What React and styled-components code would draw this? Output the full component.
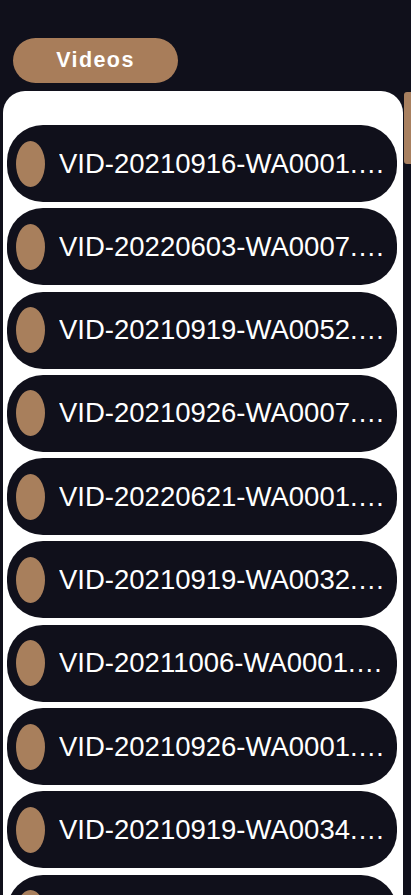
import React from 'react';
import styled, { createGlobalStyle } from 'styled-components';

const videos = [
    'VID-20210916-WA0001',
    'VID-20220603-WA0007',
    'VID-20210919-WA0052',
    'VID-20210926-WA0007',
    'VID-20220621-WA0001',
    'VID-20210919-WA0032',
    'VID-20211006-WA0001',
    'VID-20210926-WA0001',
    'VID-20210919-WA0034',
    'VID-20210919-WA0040',
];

const GlobalStyle = createGlobalStyle`
    html, body {
        margin : 0;
        padding : 0;
        background : #10101b;
        overflow : hidden;
    }
    body {
        font-family : "Liberation Sans", Arial, sans-serif;
    }
`;

export default function App() {
    return (
        <Screen>
            <GlobalStyle />
            <Header>
                <TabPill>Videos</TabPill>
            </Header>
            <Card>
                <List>
                    {videos.map((name) => (
                        <VideoRow key={name}>
                            <Dot />
                            <FileName>{name}.…</FileName>
                        </VideoRow>
                    ))}
                </List>
            </Card>
            <ScrollThumb />
        </Screen>
    );
}

const Screen = styled.div`
    position : relative;
    width : 411px;
    height : 895px;
    overflow : hidden;
    background : #10101b;
    display : flex;
    flex-direction : column;
`;

const Header = styled.div`
    height : 91px;
    padding : 38px 0 0 13px;
    box-sizing : border-box;
    display : flex;
    align-items : flex-start;
`;

const TabPill = styled.div`
    width : 165px;
    height : 45px;
    border-radius : 23px;
    background : #a87d5a;
    color : #fff;
    font-weight : 700;
    font-size : 21.5px;
    letter-spacing : 1.4px;
    display : flex;
    align-items : center;
    justify-content : center;
`;

const Card = styled.div`
    flex : 1;
    margin : 0 8px 0 3px;
    background : #ffffff;
    border-radius : 22px 22px 0 0;
    padding : 34px 6px 0 4px;
    overflow : hidden;
`;

const List = styled.div`
    display : flex;
    flex-direction : column;
    gap : 6.3px;
`;

const VideoRow = styled.div`
    flex : none;
    height : 77px;
    border-radius : 36px;
    background : #10101b;
    display : flex;
    align-items : center;
    padding-left : 9px;
    box-sizing : border-box;
    overflow : hidden;
`;

const Dot = styled.span`
    flex : none;
    width : 29px;
    height : 46px;
    border-radius : 50%;
    background : #a87f5c;
`;

const FileName = styled.span`
    margin-left : 14px;
    color : #ffffff;
    font-size : 27.5px;
    white-space : nowrap;
    overflow : hidden;
`;

const ScrollThumb = styled.div`
    position : absolute;
    right : 0;
    top : 92px;
    width : 7px;
    height : 72px;
    border-radius : 3px 0 0 3px;
    background : #a88060;
`;
